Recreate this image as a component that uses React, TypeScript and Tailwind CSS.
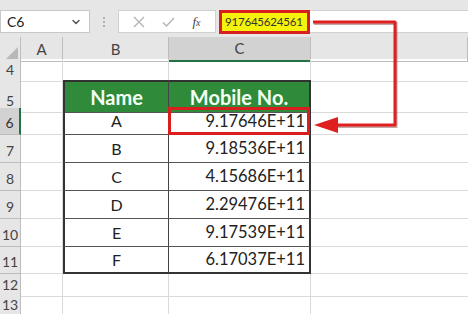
import { ChevronDown } from 'lucide-react';

const COLS = ['A', 'B', 'C', ''];

// row number, height class
const ROWS: { n: number; h: string }[] = [
  { n: 4, h: 'h-[21px]' },
  { n: 5, h: 'h-[28px]' },
  { n: 6, h: 'h-[27px]' },
  { n: 7, h: 'h-[28px]' },
  { n: 8, h: 'h-[28px]' },
  { n: 9, h: 'h-[28px]' },
  { n: 10, h: 'h-[28px]' },
  { n: 11, h: 'h-[27px]' },
  { n: 12, h: 'h-[20px]' },
  { n: 13, h: 'h-[20px]' },
];

const DATA: Record<number, [string, string]> = {
  6: ['A', '9.17646E+11'],
  7: ['B', '9.18536E+11'],
  8: ['C', '4.15686E+11'],
  9: ['D', '2.29476E+11'],
  10: ['E', '9.17539E+11'],
  11: ['F', '6.17037E+11'],
};

function FormulaBar() {
  return (
    <div className="h-[37px] bg-[#e6e6e6] pt-[10px] flex items-start">
      <div className="w-[90px] h-[23px] bg-white border border-[#c8c8c8] flex items-center justify-between pl-[6px] pr-[7px]">
        <span className="text-[14px] text-[#222]">C6</span>
        <ChevronDown className="w-3 h-3 text-[#555]" strokeWidth={3} />
      </div>
      <div className="w-[28px] h-[23px] flex flex-col items-center justify-center gap-[2px]">
        <span className="w-[2px] h-[2px] bg-[#b0b0b0]" />
        <span className="w-[2px] h-[2px] bg-[#b0b0b0]" />
        <span className="w-[2px] h-[2px] bg-[#b0b0b0]" />
      </div>
      <div className="w-[98px] h-[23px] bg-white border border-[#d0d0d0] flex items-center justify-around px-[6px]">
        <svg width="12" height="12" viewBox="0 0 12 12">
          <path d="M1 1L11 11M11 1L1 11" stroke="#b4b4b4" strokeWidth="1.4" />
        </svg>
        <svg width="13" height="12" viewBox="0 0 13 12">
          <path d="M1 6.5L4.5 10L12 2" stroke="#b4b4b4" strokeWidth="1.4" fill="none" />
        </svg>
        <span className="text-[13px] italic text-[#444] font-['Liberation_Serif',serif]">
          f<span className="text-[10px]">x</span>
        </span>
      </div>
      <div className="flex-1 ml-[3px] h-[23px] bg-white border-y border-[#d0d0d0] flex items-center">
        <div className="h-[24px] w-[91px] bg-[#f5f20c] border-[3px] border-[#d81e1e] flex items-center pl-[3px] text-[11.5px] tracking-[-0.2px] whitespace-nowrap overflow-hidden text-[#333] font-['Lato',sans-serif]">
          917645624561
        </div>
      </div>
    </div>
  );
}

function ColumnHeaders() {
  return (
    <div className="grid grid-cols-[21px_42px_106px_142px_1fr] h-[22px] bg-[#e6e6e6] text-[15px] text-[#444]">
      <div className="border-r border-b border-[#bdbdbd] flex items-end justify-end pr-[2px] pb-[2px]">
        <svg width="12" height="12" viewBox="0 0 12 12">
          <path d="M12 0L12 12L0 12Z" fill="#b8b8b8" />
        </svg>
      </div>
      {COLS.map((c, i) => (
        <div
          key={i}
          className={
            c === 'C'
              ? 'bg-[#d2d2d2] border-r border-[#bdbdbd] border-b-2 border-b-[#217346] flex items-center justify-center'
              : 'border-r border-b border-[#bdbdbd] flex items-center justify-center'
          }
        >
          {c}
        </div>
      ))}
    </div>
  );
}

function Row({ n, h }: { n: number; h: string }) {
  const selected = n === 6;
  const head = n === 5;
  const data = DATA[n];
  const inTable = head || !!data;

  const tableB = inTable
    ? `border-l-2 border-l-[#333] border-r border-r-[#444] ${n === 11 ? 'border-b-2 border-b-[#333]' : 'border-b border-b-[#555]'}`
    : 'border-r border-b border-[#dadada]';
  const tableC = inTable
    ? `border-r-2 border-r-[#333] ${n === 11 ? 'border-b-2 border-b-[#333]' : 'border-b border-b-[#555]'}`
    : 'border-r border-b border-[#dadada]';

  return (
    <div className={`grid grid-cols-[21px_42px_106px_142px_1fr] ${h}`}>
      <div
        className={
          selected
            ? 'bg-[#d2d2d2] border-b border-[#bdbdbd] border-r-2 border-r-[#217346] flex items-end justify-center pb-[1px] text-[14px] text-[#333]'
            : 'bg-[#e6e6e6] border-r border-b border-[#bdbdbd] flex items-end justify-center pb-[1px] text-[14px] text-[#444]'
        }
      >
        {n}
      </div>
      <div className="border-r border-b border-[#dadada]" />
      <div
        className={`${tableB} flex items-center justify-center ${
          head ? 'bg-[#2f8b3a] text-[#f4fff4] font-bold text-[20px] border-t-2 border-t-[#333]' : 'text-[16px] text-[#222]'
        }`}
      >
        {head ? 'Name' : data ? data[0] : ''}
      </div>
      <div
        className={`${tableC} relative flex items-center ${
          head
            ? 'bg-[#2f8b3a] text-[#f4fff4] font-bold text-[20px] justify-center border-t-2 border-t-[#333]'
            : 'text-[16.5px] text-[#222] justify-end pr-[4px]'
        }`}
      >
        {head ? 'Mobile No.' : data ? data[1] : ''}
        {selected && (
          <div className="absolute -left-[1px] -top-[1px] -right-[1px] -bottom-[1px] border-[3px] border-[#d81e1e]" />
        )}
      </div>
      <div className="border-b border-[#dadada]" />
    </div>
  );
}

export default function App() {
  return (
    <div className="relative w-[468px] h-[314px] overflow-hidden bg-white font-['Lato','Open_Sans',sans-serif]">
      <FormulaBar />
      <ColumnHeaders />
      {ROWS.map(r => (
        <Row key={r.n} n={r.n} h={r.h} />
      ))}
      {/* red arrow from formula value to cell */}
      <svg className="absolute left-0 top-0 pointer-events-none" width="468" height="314">
        <g transform="translate(1,1.5)" opacity="0.35">
          <path d="M313 22H395V125H336" stroke="#5a0000" strokeWidth="3" fill="none" />
        </g>
        <path d="M313 22H395V125H336" stroke="#e01f1f" strokeWidth="3" fill="none" strokeLinejoin="round" />
        <path d="M314 125L338 117V133Z" fill="#e01f1f" />
      </svg>
    </div>
  );
}
